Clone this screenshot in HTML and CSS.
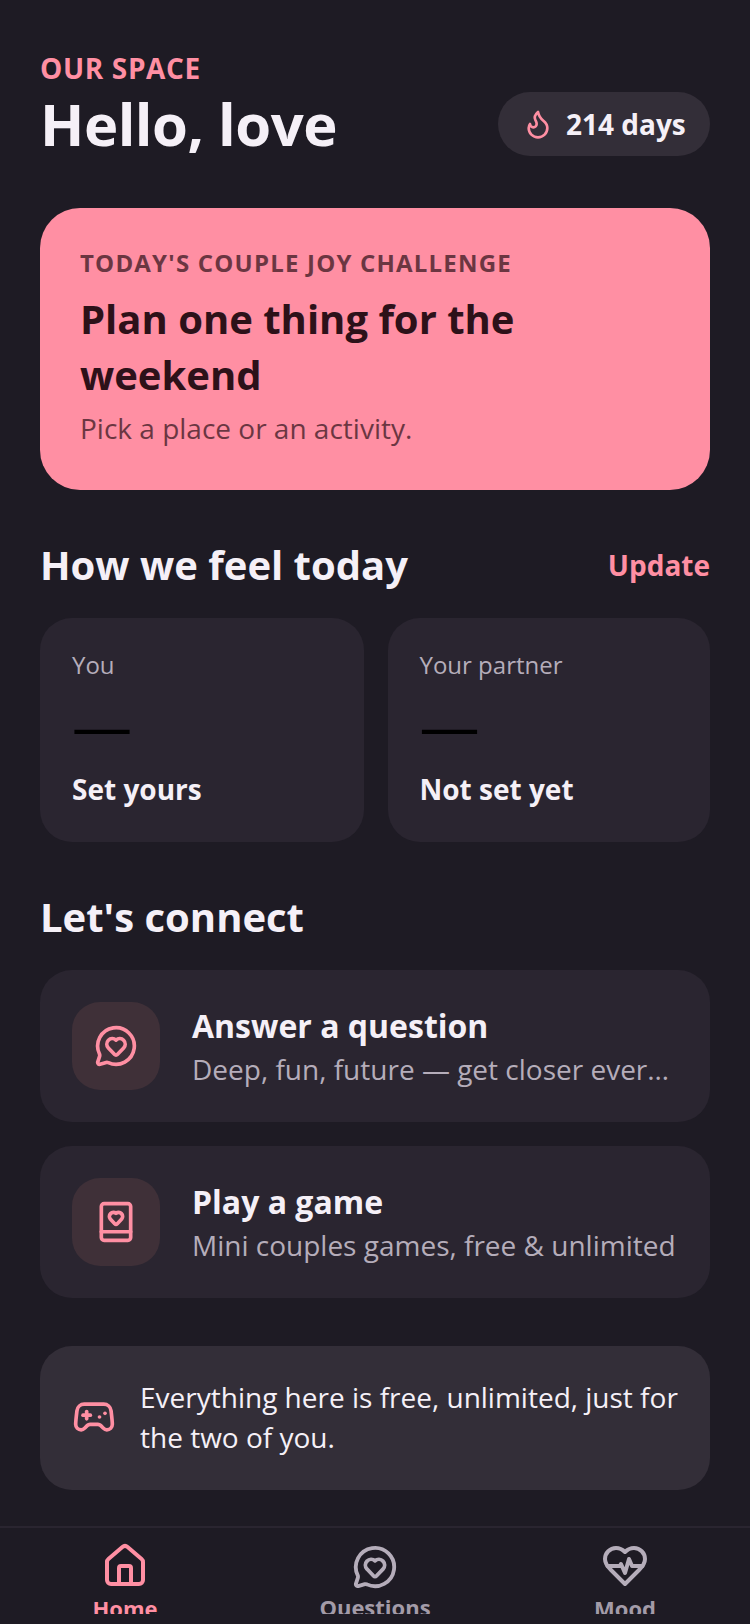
FILE: index.html
```html
<!DOCTYPE html>
<html lang="en">
<head>
    <meta charset="UTF-8">
    <meta name="viewport" content="width=device-width, initial-scale=1.0">
    <title>Our Space</title>
    <link rel="stylesheet" href="styles.css">
</head>
<body>
    <main class="content">
        <header class="top">
            <div>
                <div class="eyebrow">OUR SPACE</div>
                <h1>Hello, love</h1>
            </div>
            <div class="streak">
                <svg class="icon icon-flame" viewBox="0 0 24 24"><path d="M8.5 14.5A2.5 2.5 0 0 0 11 12c0-1.38-.5-2-1-3-1.072-2.143-.224-4.054 2-6 .5 2.5 2 4.9 4 6.5 2 1.6 3 3.5 3 5.5a7 7 0 1 1-14 0c0-1.153.433-2.294 1-3a2.5 2.5 0 0 0 2.5 2.5z"/></svg>
                <span>214 days</span>
            </div>
        </header>

        <section class="challenge">
            <div class="challenge-label">TODAY'S COUPLE JOY CHALLENGE</div>
            <h2>Plan one thing for the weekend</h2>
            <p>Pick a place or an activity.</p>
        </section>

        <div class="section-head">
            <h3>How we feel today</h3>
            <span class="update">Update</span>
        </div>
        <div class="moods">
            <div class="mood">
                <div class="mood-who">You</div>
                <div class="mood-face">—</div>
                <div class="mood-state">Set yours</div>
            </div>
            <div class="mood">
                <div class="mood-who">Your partner</div>
                <div class="mood-face">—</div>
                <div class="mood-state">Not set yet</div>
            </div>
        </div>

        <h3 class="connect-title">Let's connect</h3>
        <div class="actions">
            <div class="action">
                <div class="action-icon">
                    <svg class="icon" viewBox="0 0 24 24"><path d="M2.992 16.342a2 2 0 0 1 .094 1.167l-1.065 3.29a1 1 0 0 0 1.236 1.168l3.413-.998a2 2 0 0 1 1.099.092 10 10 0 1 0-4.777-4.719"/><path d="M7.828 13.07A3 3 0 0 1 12 8.764a3 3 0 0 1 4.172 4.306l-3.447 3.62a1 1 0 0 1-1.449 0z"/></svg>
                </div>
                <div class="action-text">
                    <div class="action-title">Answer a question</div>
                    <div class="action-sub">Deep, fun, future — get closer every day</div>
                </div>
            </div>
            <div class="action">
                <div class="action-icon">
                    <svg class="icon" viewBox="0 0 24 24"><rect x="4" y="2" width="16" height="20" rx="1.5"/><path d="M4 17.3h16"/><path d="M8.9 10.4A2.2 2.2 0 0 1 12 7.3a2.2 2.2 0 0 1 3.1 3.1l-2.4 2.5a1 1 0 0 1-1.4 0z"/></svg>
                </div>
                <div class="action-text">
                    <div class="action-title">Play a game</div>
                    <div class="action-sub">Mini couples games, free &amp; unlimited</div>
                </div>
            </div>
        </div>

        <div class="note">
            <svg class="icon" viewBox="0 0 24 24"><path d="M6 11h4"/><path d="M8 9v4"/><path d="M15 12h.01"/><path d="M18 10h.01"/><path d="M17.32 5H6.68a4 4 0 0 0-3.978 3.59c-.006.052-.01.101-.017.152C2.604 9.416 2 14.456 2 16a3 3 0 0 0 3 3c1 0 1.5-.5 2-1l1.414-1.414A2 2 0 0 1 9.828 16h4.344a2 2 0 0 1 1.414.586L17 18c.5.5 1 1 2 1a3 3 0 0 0 3-3c0-1.545-.604-6.584-.685-7.258-.007-.05-.011-.1-.017-.151A4 4 0 0 0 17.32 5z"/></svg>
            <p>Everything here is free, unlimited, just for the two of you.</p>
        </div>
    </main>

    <nav class="tabs">
        <div class="tab active">
            <svg class="icon" viewBox="0 0 24 24"><path d="M15 21v-8a1 1 0 0 0-1-1h-4a1 1 0 0 0-1 1v8"/><path d="M3 10a2 2 0 0 1 .709-1.528l7-5.999a2 2 0 0 1 2.582 0l7 5.999A2 2 0 0 1 21 10v9a2 2 0 0 1-2 2H5a2 2 0 0 1-2-2z"/></svg>
            <span>Home</span>
        </div>
        <div class="tab">
            <svg class="icon icon-chat" viewBox="0 0 24 24"><path d="M2.992 16.342a2 2 0 0 1 .094 1.167l-1.065 3.29a1 1 0 0 0 1.236 1.168l3.413-.998a2 2 0 0 1 1.099.092 10 10 0 1 0-4.777-4.719"/><path d="M7.828 13.07A3 3 0 0 1 12 8.764a3 3 0 0 1 4.172 4.306l-3.447 3.62a1 1 0 0 1-1.449 0z"/></svg>
            <span>Questions</span>
        </div>
        <div class="tab">
            <svg class="icon" viewBox="0 0 24 24"><path d="M19 14c1.49-1.46 3-3.21 3-5.5A5.5 5.5 0 0 0 16.5 3c-1.76 0-3 .5-4.5 2-1.5-1.5-2.74-2-4.5-2A5.5 5.5 0 0 0 2 8.5c0 2.3 1.5 4.05 3 5.5l7 7Z"/><path d="M3.22 12H9.5l.5-1 2 4.5 2-7 1.5 3.5h5.27"/></svg>
            <span>Mood</span>
        </div>
    </nav>
</body>
</html>
```

FILE: styles.css
```css
* {
    box-sizing: border-box;
}
body {
    font-family: "Open Sans", "Noto Sans", sans-serif;
    background-color: #1e1b24;
    color: #f5f0f7;
    margin: 0;
    height: 1624px;
    display: flex;
    flex-direction: column;
    overflow: hidden;
}
h1, h2, h3, p {
    margin: 0;
}
.icon {
    width: 44px;
    height: 44px;
    fill: none;
    stroke: #ff8fa3;
    stroke-width: 2;
    stroke-linecap: round;
    stroke-linejoin: round;
    flex-shrink: 0;
}
.content {
    flex: 1;
    min-height: 0;
    padding: 52px 40px 0;
}
.top {
    display: flex;
    justify-content: space-between;
    align-items: flex-end;
}
.eyebrow {
    color: #ff8fa3;
    font-size: 28px;
    line-height: 32px;
    font-weight: 700;
    letter-spacing: 0.65px;
}
h1 {
    font-size: 58px;
    line-height: 72px;
    font-weight: 700;
    letter-spacing: -0.5px;
    margin-top: 4px;
}
.streak {
    display: flex;
    align-items: center;
    gap: 12px;
    height: 64px;
    width: 212px;
    padding-left: 24px;
    margin-bottom: 4px;
    border-radius: 32px;
    background-color: #332e38;
    font-size: 28px;
    font-weight: 700;
}
.icon-flame {
    width: 32px;
    height: 32px;
}
.challenge {
    margin-top: 48px;
    height: 282px;
    padding: 37px 40px 0;
    border-radius: 40px;
    background-color: #ff8fa3;
    color: #2d1119;
}
.challenge-label {
    font-size: 24px;
    line-height: 36px;
    font-weight: 700;
    letter-spacing: 1.2px;
    opacity: 0.7;
}
.challenge h2 {
    font-size: 40px;
    line-height: 56px;
    font-weight: 700;
    margin-top: 10px;
    width: 500px;
}
.challenge p {
    font-size: 28px;
    line-height: 40px;
    margin-top: 5px;
    opacity: 0.7;
}
.section-head {
    display: flex;
    justify-content: space-between;
    align-items: center;
    margin-top: 47px;
}
h3 {
    font-size: 40px;
    line-height: 56px;
    font-weight: 700;
}
.update {
    color: #ff8fa3;
    font-size: 28px;
    font-weight: 700;
}
.moods {
    display: grid;
    grid-template-columns: 323.5px 1fr;
    gap: 24px;
    margin-top: 25px;
}
.mood {
    height: 224px;
    padding: 30px 32px 0;
    border-radius: 32px;
    background-color: #2a2530;
}
.mood-who {
    color: #b5adba;
    font-size: 24px;
    line-height: 34px;
}
.mood-face {
    color: #000;
    font-size: 60px;
    line-height: 80px;
    margin-top: 3px;
}
.mood-state {
    font-size: 28px;
    line-height: 40px;
    font-weight: 700;
    margin-top: 4px;
}
.connect-title {
    margin-top: 47px;
}
.actions {
    display: flex;
    flex-direction: column;
    gap: 24px;
    margin-top: 25px;
}
.action {
    display: flex;
    align-items: center;
    gap: 32px;
    height: 152px;
    padding: 0 32px;
    border-radius: 32px;
    background-color: #2a2530;
}
.action-icon {
    width: 88px;
    height: 88px;
    display: flex;
    align-items: center;
    justify-content: center;
    border-radius: 28px;
    background-color: #3f3038;
    flex-shrink: 0;
}
.action-text {
    min-width: 0;
}
.action-title {
    font-size: 32px;
    line-height: 44px;
    font-weight: 700;
}
.action-sub {
    color: #b5adba;
    font-size: 28px;
    line-height: 40px;
    margin-top: 1px;
    white-space: nowrap;
    overflow: hidden;
    text-overflow: ellipsis;
}
.note {
    display: flex;
    align-items: center;
    gap: 24px;
    height: 144px;
    margin-top: 48px;
    padding: 0 32px 2px;
    border-radius: 32px;
    background-color: #332e38;
}
.note p {
    font-size: 28px;
    line-height: 40px;
}
.tabs {
    height: 98px;
    display: grid;
    grid-template-columns: repeat(3, 1fr);
    border-top: 2px solid #2a2530;
    padding-top: 14px;
}
.tab {
    display: flex;
    flex-direction: column;
    align-items: center;
    height: 72px;
    overflow: hidden;
    color: #a39ba8;
    font-size: 22px;
    font-weight: 700;
    line-height: 30px;
}
.tab .icon {
    width: 48px;
    height: 48px;
    margin-bottom: 3px;
    stroke: #b5adba;
}
.tab .icon-chat {
    width: 46px;
    height: 46px;
    margin-top: 2px;
    margin-bottom: 2px;
}
.tab.active {
    color: #ff8fa3;
}
.tab.active .icon {
    stroke: #ff8fa3;
}
```
